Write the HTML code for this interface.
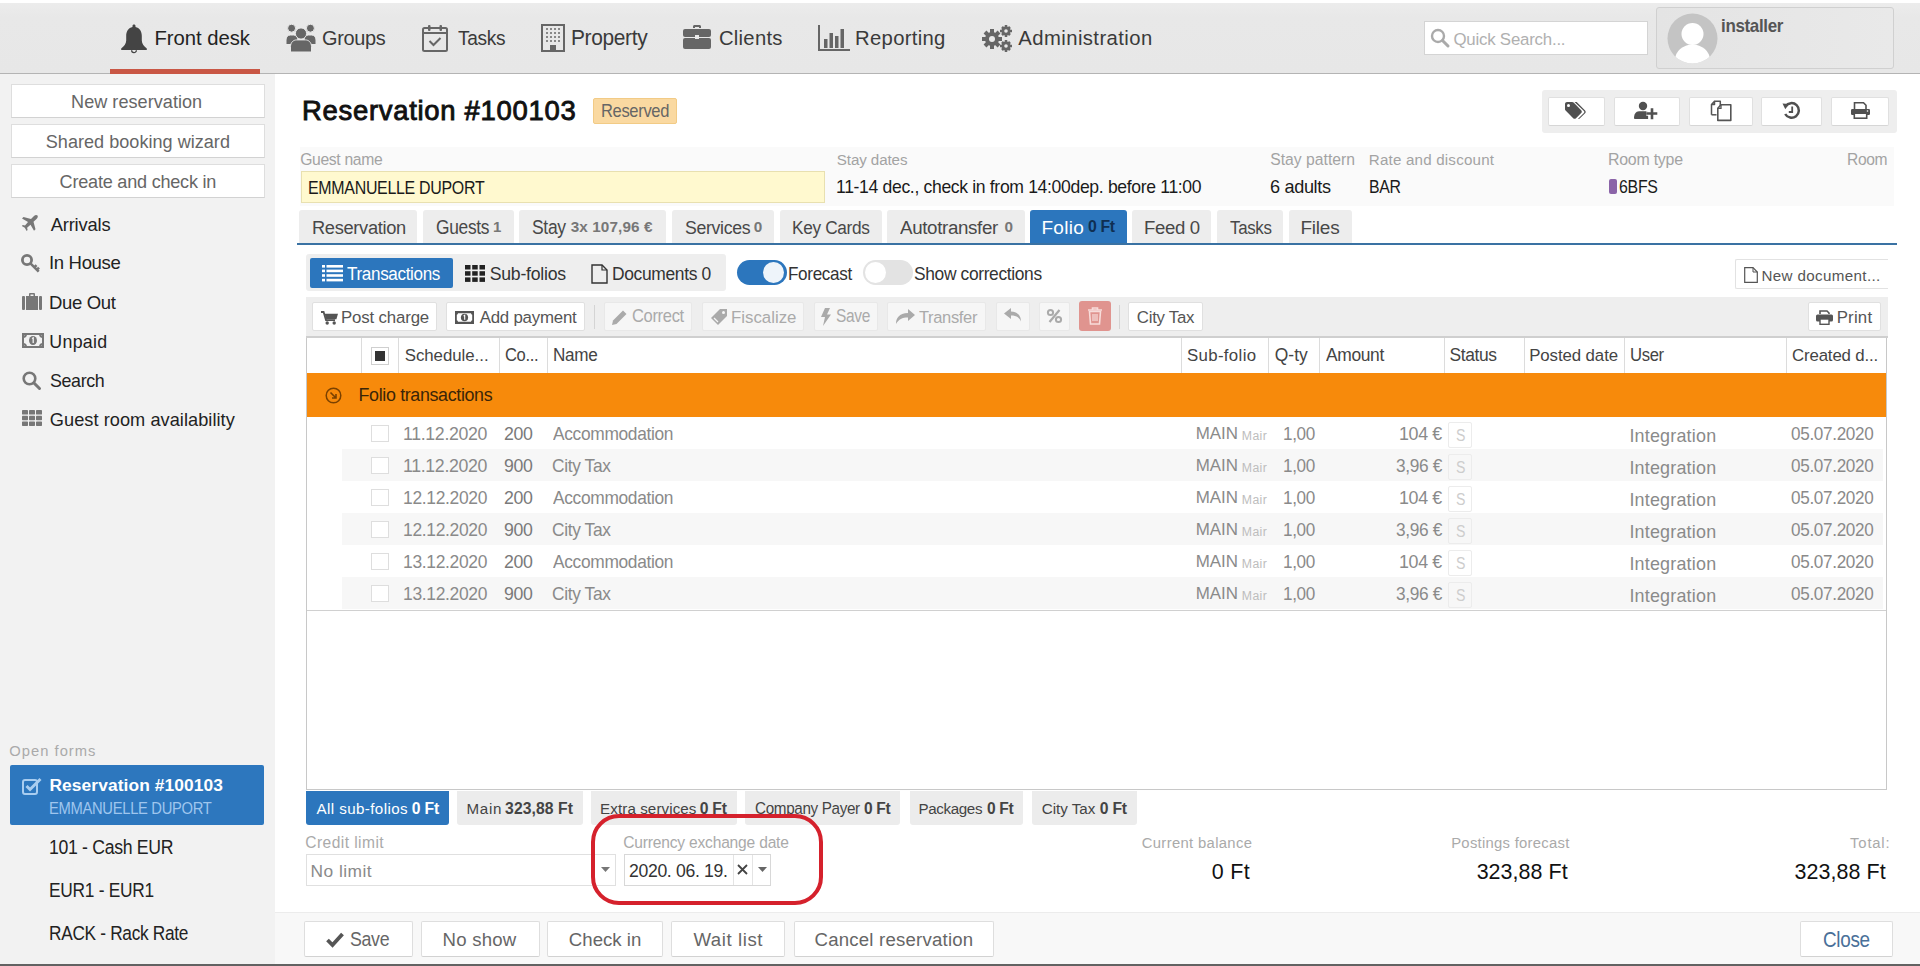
<!DOCTYPE html>
<html><head><meta charset="utf-8">
<style>
*{box-sizing:border-box;margin:0;padding:0}
html,body{width:1920px;height:966px;overflow:hidden;background:#fff;font-family:"Liberation Sans",sans-serif;color:#333}
.a{position:absolute}
.t{position:absolute;white-space:nowrap;line-height:1;transform-origin:0 0}
svg.a{overflow:visible}
</style></head><body>

<div class="a" style="left:0px;top:3px;width:1920px;height:71px;background:linear-gradient(#ececec,#e8e8e8 20%,#e7e7e7);border-bottom:1px solid #b4b4b4"></div>
<div class="a" style="left:110px;top:69px;width:150px;height:5px;background:#c95745"></div>
<svg class="a" style="left:121px;top:24px" width="26" height="28" viewBox="0 0 26 28"><path d="M13 .5c.9 0 1.5.6 1.5 1.4v1c4 .9 6.3 4.3 6.3 8.8v4.8c0 3.2 2.3 6 5 8v1.6H.2v-1.6c2.7-2 5-4.8 5-8v-4.8c0-4.5 2.3-7.9 6.3-8.8v-1c0-.8.6-1.4 1.5-1.4z" fill="#444"/><path d="M10.6 26.2a2.4 2.4 0 0 0 4.8 0" fill="none" stroke="#444" stroke-width="1.3"/></svg>
<div class="t" style="left:154.38px;top:28.00px;font-size:20.28px;letter-spacing:-0.020px;color:#222;">Front desk</div>
<svg class="a" style="left:286px;top:24px" width="30" height="28" viewBox="0 0 30 28"><g fill="#666" stroke="#e8e8e8" stroke-width="1"><circle cx="5.6" cy="4.2" r="4"/><circle cx="24.4" cy="4.2" r="4"/><path d="M0 20.5v-4.5c0-3 1.8-5 4.5-5h3c2.7 0 4.5 2 4.5 5v4.5z"/><path d="M18 20.5v-4.5c0-3 1.8-5 4.5-5h3c2.7 0 4.5 2 4.5 5v4.5z"/><circle cx="15" cy="9.5" r="5.6"/><path d="M4.5 28v-5.5c0-4 2.8-6.6 6.2-6.6h8.6c3.4 0 6.2 2.6 6.2 6.6V28z"/></g></svg>
<div class="t" style="left:322.00px;top:27.00px;font-size:21.00px;letter-spacing:-0.350px;color:#3a3a3a;transform:scaleX(0.9488);">Groups</div>
<svg class="a" style="left:422px;top:24px" width="26" height="28" viewBox="0 0 26 28"><rect x="1" y="4" width="24" height="23" rx="1.5" fill="none" stroke="#666" stroke-width="2"/><path d="M1 9h24" stroke="#666" stroke-width="2"/><rect x="6" y="1" width="2.5" height="6" rx="1" fill="#666"/><rect x="17.5" y="1" width="2.5" height="6" rx="1" fill="#666"/><path d="M7.5 17l4 4 7-7" fill="none" stroke="#666" stroke-width="2"/></svg>
<div class="t" style="left:458.12px;top:28.00px;font-size:20.28px;letter-spacing:-0.350px;color:#3a3a3a;transform:scaleX(0.9434);">Tasks</div>
<svg class="a" style="left:541px;top:24px" width="24" height="28" viewBox="0 0 24 28"><rect x="1" y="1" width="22" height="26" fill="none" stroke="#666" stroke-width="2"/><g fill="#888"><rect x="5" y="4" width="2" height="2"/><rect x="9" y="4" width="2" height="2"/><rect x="13" y="4" width="2" height="2"/><rect x="17" y="4" width="2" height="2"/><rect x="5" y="8" width="2" height="2"/><rect x="9" y="8" width="2" height="2"/><rect x="13" y="8" width="2" height="2"/><rect x="17" y="8" width="2" height="2"/><rect x="5" y="12" width="2" height="2"/><rect x="9" y="12" width="2" height="2"/><rect x="13" y="12" width="2" height="2"/><rect x="17" y="12" width="2" height="2"/><rect x="5" y="16" width="2" height="2"/><rect x="9" y="16" width="2" height="2"/><rect x="13" y="16" width="2" height="2"/><rect x="17" y="16" width="2" height="2"/></g><rect x="9" y="21" width="6" height="6" fill="#666"/></svg>
<div class="t" style="left:571.33px;top:28.00px;font-size:21.30px;letter-spacing:-0.350px;color:#3a3a3a;transform:scaleX(0.9820);">Property</div>
<svg class="a" style="left:683px;top:25px" width="28" height="24" viewBox="0 0 28 24"><path d="M10 3V1.5C10 .7 10.7 0 11.5 0h5c.8 0 1.5.7 1.5 1.5V3h-2V2h-4v1z" fill="#666"/><rect x="0" y="4" width="28" height="8" rx="2" fill="#666"/><rect x="0" y="13" width="28" height="11" rx="2" fill="#666"/><rect x="12" y="10" width="4" height="4" fill="#e9e9e9"/></svg>
<div class="t" style="left:718.99px;top:28.00px;font-size:20.28px;letter-spacing:0.247px;color:#3a3a3a;">Clients</div>
<svg class="a" style="left:818px;top:25px" width="32" height="26" viewBox="0 0 32 26"><path d="M1 0v25h31" fill="none" stroke="#666" stroke-width="2"/><rect x="6" y="14" width="3.5" height="9" fill="#666"/><rect x="11.5" y="8" width="3.5" height="15" fill="#666"/><rect x="17" y="11" width="3.5" height="12" fill="#666"/><rect x="22.5" y="4" width="3.5" height="19" fill="#666"/></svg>
<div class="t" style="left:855.08px;top:28.00px;font-size:20.28px;letter-spacing:0.293px;color:#3a3a3a;">Reporting</div>
<svg class="a" style="left:981px;top:24px" width="32" height="29" viewBox="0 0 32 29"><g fill="#666"><circle cx="11" cy="15" r="7"/><g stroke="#666" stroke-width="4"><path d="M11 5v20M1 15h20M4 8l14 14M18 8L4 22"/></g><circle cx="25" cy="7" r="4.5"/><g stroke="#666" stroke-width="2.5"><path d="M25 1v12M19 7h12M21 3l8 8M29 3l-8 8"/></g><circle cx="25" cy="22" r="4.5"/><g stroke="#666" stroke-width="2.5"><path d="M25 16v12M19 22h12M21 18l8 8M29 18l-8 8"/></g></g><circle cx="11" cy="15" r="3" fill="#e9e9e9"/><circle cx="25" cy="7" r="1.8" fill="#e9e9e9"/><circle cx="25" cy="22" r="1.8" fill="#e9e9e9"/></svg>
<div class="t" style="left:1018.30px;top:28.00px;font-size:20.28px;letter-spacing:0.428px;color:#3a3a3a;">Administration</div>
<div class="a" style="left:1424px;top:21px;width:224px;height:34px;background:#fff;border:1px solid #d4d4d4"></div>
<svg class="a" style="left:1430px;top:28px" width="20" height="20" viewBox="0 0 20 20"><circle cx="8" cy="8" r="6" fill="none" stroke="#aaa" stroke-width="2.4"/><path d="M12.5 12.5l5.5 5.5" stroke="#aaa" stroke-width="3" stroke-linecap="round"/></svg>
<div class="t" style="left:1453.44px;top:32.00px;font-size:16.83px;letter-spacing:-0.210px;color:#b0b0b0;">Quick Search...</div>
<div class="a" style="left:1656px;top:7px;width:238px;height:62px;border:1px solid #d0d0d0;border-radius:3px;background:linear-gradient(90deg,#e4e4e4,#e9e9e9)"></div>
<svg class="a" style="left:1667px;top:13px" width="51" height="51" viewBox="0 0 51 51"><defs><clipPath id="cc"><circle cx="25.5" cy="25.5" r="25"/></clipPath></defs><circle cx="25.5" cy="25.5" r="25" fill="#c4c4c4"/><g clip-path="url(#cc)" fill="#fff"><circle cx="25.5" cy="21" r="11"/><ellipse cx="25.5" cy="47" rx="17.5" ry="15.5"/></g></svg>
<div class="t" style="left:1720.81px;top:18.00px;font-size:17.93px;letter-spacing:-0.350px;color:#555;font-weight:bold;transform:scaleX(0.9466);">installer</div>
<div class="a" style="left:0px;top:74px;width:275px;height:890px;background:#f2f2f2"></div>
<div class="a" style="left:11px;top:84px;width:254px;height:34px;background:#fff;border:1px solid #dedede;border-bottom-color:#d2d2d2"></div>
<div class="a" style="left:11px;top:124px;width:254px;height:34px;background:#fff;border:1px solid #dedede;border-bottom-color:#d2d2d2"></div>
<div class="a" style="left:11px;top:164px;width:254px;height:34px;background:#fff;border:1px solid #dedede;border-bottom-color:#d2d2d2"></div>
<div class="t" style="left:71.05px;top:93.00px;font-size:18.07px;letter-spacing:0.041px;color:#666;">New reservation</div>
<div class="t" style="left:45.79px;top:133.00px;font-size:18.07px;letter-spacing:0.021px;color:#666;">Shared booking wizard</div>
<div class="t" style="left:59.60px;top:173.00px;font-size:18.07px;letter-spacing:-0.214px;color:#666;">Create and check in</div>
<svg class="a" style="left:21px;top:214px" width="18" height="18" viewBox="0 0 18 18"><path d="M16.5 1.5c-1-1-2.5-.5-3.5.5L10 5 2.5 3 1 4.5 7 8 4 11.5 1.8 11 .8 12l3 1.8L5.6 17l1-1-.5-2.2L9.5 10.8l3.5 6 1.5-1.5-2-7.5L15.5 5c1-1 1.8-2.5 1-3.5z" fill="#777"/></svg>
<div class="t" style="left:50.70px;top:216.00px;font-size:18.34px;letter-spacing:-0.177px;color:#222;">Arrivals</div>
<svg class="a" style="left:21px;top:254px" width="20" height="20" viewBox="0 0 20 20"><circle cx="6" cy="6" r="4.6" fill="none" stroke="#777" stroke-width="2.8"/><path d="M9.2 9.2l8.5 8.5M13.3 13.3l2.2-2.2M15.8 15.8l2.2-2.2" stroke="#777" stroke-width="2.6"/></svg>
<div class="t" style="left:49.03px;top:254.00px;font-size:18.84px;letter-spacing:-0.350px;color:#222;transform:scaleX(0.9848);">In House</div>
<svg class="a" style="left:22px;top:293px" width="20" height="17" viewBox="0 0 20 17"><path d="M7 3V1.2C7 .5 7.5 0 8.2 0h3.6c.7 0 1.2.5 1.2 1.2V3h-1.5V1.5h-3V3z" fill="#777"/><rect x="0" y="3" width="3" height="14" rx="1" fill="#777"/><rect x="4" y="3" width="12" height="14" fill="#777"/><rect x="17" y="3" width="3" height="14" rx="1" fill="#777"/></svg>
<div class="t" style="left:49.22px;top:293.00px;font-size:19.00px;letter-spacing:-0.350px;color:#222;transform:scaleX(0.9751);">Due Out</div>
<svg class="a" style="left:22px;top:333px" width="22" height="15" viewBox="0 0 22 15"><rect x="1" y="1" width="20" height="13" fill="none" stroke="#777" stroke-width="2"/><path d="M1 4a3 3 0 0 0 3-3M21 4a3 3 0 0 1-3-3M1 11a3 3 0 0 1 3 3M21 11a3 3 0 0 0-3 3" fill="none" stroke="#777" stroke-width="2"/><ellipse cx="11" cy="7.5" rx="4" ry="4.5" fill="#777"/><path d="M10 5.5l1.2-.6V10" stroke="#f2f2f2" stroke-width="1.3" fill="none"/></svg>
<div class="t" style="left:49.37px;top:334.00px;font-size:17.79px;letter-spacing:0.277px;color:#222;">Unpaid</div>
<svg class="a" style="left:22px;top:371px" width="19" height="19" viewBox="0 0 19 19"><circle cx="7.5" cy="7.5" r="5.8" fill="none" stroke="#777" stroke-width="2.6"/><path d="M12 12l5.5 5.5" stroke="#777" stroke-width="3" stroke-linecap="round"/></svg>
<div class="t" style="left:49.90px;top:372.00px;font-size:18.34px;letter-spacing:-0.350px;color:#222;transform:scaleX(0.9725);">Search</div>
<svg class="a" style="left:22px;top:410px" width="20" height="16" viewBox="0 0 20 16"><g fill="#777"><rect x="0" y="0" width="6" height="4.6" rx=".7"/><rect x="7" y="0" width="6" height="4.6" rx=".7"/><rect x="14" y="0" width="6" height="4.6" rx=".7"/><rect x="0" y="5.7" width="6" height="4.6" rx=".7"/><rect x="7" y="5.7" width="6" height="4.6" rx=".7"/><rect x="14" y="5.7" width="6" height="4.6" rx=".7"/><rect x="0" y="11.4" width="6" height="4.6" rx=".7"/><rect x="7" y="11.4" width="6" height="4.6" rx=".7"/><rect x="14" y="11.4" width="6" height="4.6" rx=".7"/></g></svg>
<div class="t" style="left:49.79px;top:411.00px;font-size:18.21px;letter-spacing:0.048px;color:#222;">Guest room availability</div>
<div class="t" style="left:9.34px;top:744.00px;font-size:14.76px;letter-spacing:1.007px;color:#aaa;">Open forms</div>
<div class="a" style="left:10px;top:765px;width:254px;height:60px;background:#2d77be;border-radius:2px"></div>
<svg class="a" style="left:22px;top:777px" width="20" height="18" viewBox="0 0 20 18"><rect x="1" y="3" width="14" height="14" rx="2" fill="none" stroke="#a9cdf0" stroke-width="2"/><path d="M4.5 9l3.5 3.5L18.5 2" fill="none" stroke="#a9cdf0" stroke-width="3"/></svg>
<div class="t" style="left:49.47px;top:777.00px;font-size:17.38px;letter-spacing:0.093px;color:#fff;font-weight:bold;">Reservation #100103</div>
<div class="t" style="left:49.42px;top:800.00px;font-size:16.43px;letter-spacing:-0.350px;color:#9fc6ee;transform:scaleX(0.8989);">EMMANUELLE DUPORT</div>
<div class="t" style="left:49.27px;top:838.00px;font-size:19.31px;letter-spacing:-0.350px;color:#222;transform:scaleX(0.9154);">101 - Cash EUR</div>
<div class="t" style="left:49.21px;top:880.00px;font-size:20.58px;letter-spacing:-0.350px;color:#222;transform:scaleX(0.8432);">EUR1 - EUR1</div>
<div class="t" style="left:49.22px;top:924.00px;font-size:19.86px;letter-spacing:-0.350px;color:#222;transform:scaleX(0.8694);">RACK - Rack Rate</div>
<div class="t" style="left:302.00px;top:97.00px;font-size:27.45px;letter-spacing:0.711px;color:#111;-webkit-text-stroke:0.9px #111;">Reservation #100103</div>
<div class="a" style="left:593px;top:98px;width:84px;height:26px;background:#fad9a1;border:1px solid #f2cb86;border-radius:2px"></div>
<div class="t" style="left:600.68px;top:103.00px;font-size:17.93px;letter-spacing:-0.350px;color:#666;transform:scaleX(0.9206);">Reserved</div>
<div class="a" style="left:1542px;top:90px;width:355px;height:43px;background:#eeeeee;border-radius:3px"></div>
<div class="a" style="left:1548px;top:97px;width:57px;height:29px;background:#fff;border:1px solid #e0e0e0;border-bottom-color:#d6d6d6;border-radius:2px"></div>
<div class="a" style="left:1614px;top:97px;width:66px;height:29px;background:#fff;border:1px solid #e0e0e0;border-bottom-color:#d6d6d6;border-radius:2px"></div>
<div class="a" style="left:1689px;top:97px;width:64px;height:29px;background:#fff;border:1px solid #e0e0e0;border-bottom-color:#d6d6d6;border-radius:2px"></div>
<div class="a" style="left:1761px;top:97px;width:61px;height:29px;background:#fff;border:1px solid #e0e0e0;border-bottom-color:#d6d6d6;border-radius:2px"></div>
<div class="a" style="left:1831px;top:97px;width:58px;height:29px;background:#fff;border:1px solid #e0e0e0;border-bottom-color:#d6d6d6;border-radius:2px"></div>
<svg class="a" style="left:1565px;top:102px" width="23" height="17" viewBox="0 0 23 17"><path d="M0 2v5.2c0 .6.2 1 .6 1.4l7.6 7.6c.8.8 2 .8 2.8 0l5.2-5.2c.8-.8.8-2 0-2.8L8.6.6C8.2.2 7.7 0 7.2 0H2C.9 0 0 .9 0 2z" fill="#505050"/><circle cx="3.5" cy="3.5" r="1.5" fill="#fff"/><path d="M9.5 0h2.2l8.4 8.4c.8.8.8 2 0 2.8l-5.4 5.4c-.4.4-1.1.5-1.6.2l5.8-5.8c.6-.6.6-1.5 0-2.1z" fill="#505050"/></svg>
<svg class="a" style="left:1634px;top:102px" width="25" height="17" viewBox="0 0 25 17"><circle cx="9" cy="4" r="4.2" fill="#505050"/><path d="M0 16.2c0-3.8 1.8-7 5-7h7.5c.6 0 1.2.2 1.6.5v7.3H1c-.6 0-1-.3-1-.8z" fill="#505050"/><path d="M18 6.2v11M12.3 11.5h11" stroke="#fff" stroke-width="4.6"/><path d="M18 6.2v11M12.3 11.5h11" stroke="#505050" stroke-width="2.6"/></svg>
<svg class="a" style="left:1710px;top:100px" width="22" height="22" viewBox="0 0 22 22"><path d="M4.5 1.2h5.8v6.5M1.5 14.8V4.5l3-3.3v3.3h-3" fill="none" stroke="#555" stroke-width="1.5" stroke-linejoin="round"/><path d="M1.5 14.8h5" stroke="#555" stroke-width="1.5"/><path d="M11 4.8h9.8v15.6H7.8V8.3z" fill="#fff" stroke="#555" stroke-width="1.6" stroke-linejoin="round"/><path d="M11 4.8v3.5H7.8" fill="none" stroke="#555" stroke-width="1.3"/></svg>
<svg class="a" style="left:1782px;top:101px" width="19" height="19" viewBox="0 0 19 19"><path d="M3.6 5.2A7.3 7.3 0 1 1 3.2 13" fill="none" stroke="#505050" stroke-width="2.5"/><path d="M0.5 2.5l6.6.4-3.8 5.4z" fill="#505050"/><path d="M10.2 5.5v5.5H6.8" fill="none" stroke="#505050" stroke-width="1.8"/></svg>
<svg class="a" style="left:1851px;top:102px" width="19" height="17" viewBox="0 0 19 17"><path d="M3.5 7V.8h9l2.5 2.5V7" fill="none" stroke="#505050" stroke-width="1.6"/><rect x="0" y="7" width="19" height="6" rx="1.2" fill="#505050"/><circle cx="16.5" cy="9" r=".8" fill="#fff"/><rect x="3.3" y="11.2" width="12.4" height="5" fill="#fff" stroke="#505050" stroke-width="1.6"/></svg>
<div class="a" style="left:300px;top:147px;width:1594px;height:59px;background:#fafafa"></div>
<div class="t" style="left:300.21px;top:152.00px;font-size:15.71px;letter-spacing:-0.341px;color:#a3a3a3;">Guest name</div>
<div class="a" style="left:301px;top:171px;width:524px;height:32px;background:#fff9cf;border:1px solid #e8e0b0"></div>
<div class="t" style="left:307.72px;top:179.00px;font-size:18.86px;letter-spacing:-0.350px;color:#1a1a1a;transform:scaleX(0.8457);">EMMANUELLE DUPORT</div>
<div class="t" style="left:836.82px;top:152.00px;font-size:15.17px;letter-spacing:-0.108px;color:#a3a3a3;">Stay dates</div>
<div class="t" style="left:835.68px;top:178.00px;font-size:18.34px;letter-spacing:-0.350px;color:#1a1a1a;transform:scaleX(0.9589);">11-14 dec., check in from 14:00dep. before 11:00</div>
<div class="t" style="left:1270.29px;top:152.00px;font-size:15.71px;letter-spacing:0.003px;color:#a3a3a3;">Stay pattern</div>
<div class="t" style="left:1270.09px;top:178.00px;font-size:18.34px;letter-spacing:-0.350px;color:#1a1a1a;transform:scaleX(0.9886);">6 adults</div>
<div class="t" style="left:1368.79px;top:152.00px;font-size:15.17px;letter-spacing:0.188px;color:#a3a3a3;">Rate and discount</div>
<div class="t" style="left:1368.73px;top:177.00px;font-size:19.28px;letter-spacing:-0.350px;color:#1a1a1a;transform:scaleX(0.8219);">BAR</div>
<div class="t" style="left:1608.02px;top:152.00px;font-size:15.94px;letter-spacing:-0.261px;color:#a3a3a3;">Room type</div>
<div class="a" style="left:1609px;top:179px;width:8px;height:15px;background:#8b64a8;border-radius:2px"></div>
<div class="t" style="left:1618.50px;top:177.00px;font-size:19.00px;letter-spacing:-0.350px;color:#1a1a1a;transform:scaleX(0.8377);">6BFS</div>
<div class="t" style="left:1847.05px;top:152.00px;font-size:15.94px;letter-spacing:-0.350px;color:#a3a3a3;transform:scaleX(0.9795);">Room</div>
<div class="a" style="left:299px;top:210px;width:118px;height:33px;background:#ededed;border-radius:3px 3px 0 0"></div>
<div class="a" style="left:423px;top:210px;width:91px;height:33px;background:#ededed;border-radius:3px 3px 0 0"></div>
<div class="a" style="left:519px;top:210px;width:147px;height:33px;background:#ededed;border-radius:3px 3px 0 0"></div>
<div class="a" style="left:672px;top:210px;width:102px;height:33px;background:#ededed;border-radius:3px 3px 0 0"></div>
<div class="a" style="left:780px;top:210px;width:102px;height:33px;background:#ededed;border-radius:3px 3px 0 0"></div>
<div class="a" style="left:887px;top:210px;width:138px;height:33px;background:#ededed;border-radius:3px 3px 0 0"></div>
<div class="a" style="left:1132px;top:210px;width:79px;height:33px;background:#ededed;border-radius:3px 3px 0 0"></div>
<div class="a" style="left:1217px;top:210px;width:66px;height:33px;background:#ededed;border-radius:3px 3px 0 0"></div>
<div class="a" style="left:1289px;top:210px;width:63px;height:33px;background:#ededed;border-radius:3px 3px 0 0"></div>
<div class="a" style="left:1030px;top:210px;width:97px;height:34px;background:#2c76bd;border-radius:3px 3px 0 0"></div>
<div class="t" style="left:311.94px;top:218.00px;font-size:19.03px;letter-spacing:-0.350px;color:#484848;transform:scaleX(0.9613);">Reservation</div>
<div class="t" style="left:435.83px;top:218.00px;font-size:19.71px;letter-spacing:-0.350px;color:#484848;transform:scaleX(0.8820);">Guests</div>
<div class="t" style="left:493.20px;top:219.00px;font-size:15.51px;letter-spacing:-0.350px;color:#777;font-weight:bold;transform:scaleX(0.9656);">1</div>
<div class="t" style="left:531.91px;top:218.00px;font-size:19.71px;letter-spacing:-0.350px;color:#484848;transform:scaleX(0.8882);">Stay</div>
<div class="t" style="left:570.72px;top:219.00px;font-size:15.29px;letter-spacing:0.100px;color:#777;font-weight:bold;">3x 107,96 €</div>
<div class="t" style="left:685.10px;top:218.00px;font-size:19.03px;letter-spacing:-0.350px;color:#484848;transform:scaleX(0.9316);">Services</div>
<div class="t" style="left:753.79px;top:219.00px;font-size:15.29px;letter-spacing:0.339px;color:#777;font-weight:bold;">0</div>
<div class="t" style="left:791.62px;top:218.00px;font-size:19.03px;letter-spacing:-0.350px;color:#484848;transform:scaleX(0.9058);">Key Cards</div>
<div class="t" style="left:900.00px;top:218.00px;font-size:19.03px;letter-spacing:-0.350px;color:#484848;transform:scaleX(0.9849);">Autotransfer</div>
<div class="t" style="left:1004.39px;top:219.00px;font-size:15.29px;letter-spacing:-0.261px;color:#777;font-weight:bold;">0</div>
<div class="t" style="left:1041.48px;top:218.00px;font-size:19.03px;letter-spacing:0.269px;color:#fff;">Folio</div>
<div class="t" style="left:1088.07px;top:219.00px;font-size:16.00px;letter-spacing:-0.350px;color:#0f2f52;font-weight:bold;transform:scaleX(0.9868);">0 Ft</div>
<div class="t" style="left:1143.51px;top:218.00px;font-size:19.03px;letter-spacing:-0.350px;color:#484848;transform:scaleX(0.9772);">Feed 0</div>
<div class="t" style="left:1229.66px;top:218.00px;font-size:19.03px;letter-spacing:-0.350px;color:#484848;transform:scaleX(0.8877);">Tasks</div>
<div class="t" style="left:1300.48px;top:218.00px;font-size:19.03px;letter-spacing:-0.243px;color:#484848;">Files</div>
<div class="a" style="left:297px;top:243px;width:1600px;height:2px;background:#3a72a3"></div>
<div class="a" style="left:306px;top:254px;width:420px;height:37px;background:#eeeeee;border-radius:3px"></div>
<div class="a" style="left:310px;top:258px;width:143px;height:30px;background:#2c76bd;border-radius:2px"></div>
<svg class="a" style="left:322px;top:265px" width="21" height="17" viewBox="0 0 21 17"><g fill="#fff"><rect x="0" y="0" width="3" height="2.6"/><rect x="4.5" y="0" width="16.5" height="2.6"/><rect x="0" y="4.6" width="3" height="2.6"/><rect x="4.5" y="4.6" width="16.5" height="2.6"/><rect x="0" y="9.2" width="3" height="2.6"/><rect x="4.5" y="9.2" width="16.5" height="2.6"/><rect x="0" y="13.8" width="3" height="2.6"/><rect x="4.5" y="13.8" width="16.5" height="2.6"/></g></svg>
<div class="t" style="left:347.16px;top:266.00px;font-size:17.66px;letter-spacing:-0.350px;color:#fff;transform:scaleX(0.9672);">Transactions</div>
<svg class="a" style="left:465px;top:265px" width="20" height="17" viewBox="0 0 20 17"><g fill="#222"><rect x="0" y="0" width="5.5" height="4.5"/><rect x="7.2" y="0" width="5.5" height="4.5"/><rect x="14.5" y="0" width="5.5" height="4.5"/><rect x="0" y="6.2" width="5.5" height="4.5"/><rect x="7.2" y="6.2" width="5.5" height="4.5"/><rect x="14.5" y="6.2" width="5.5" height="4.5"/><rect x="0" y="12.4" width="5.5" height="4.5"/><rect x="7.2" y="12.4" width="5.5" height="4.5"/><rect x="14.5" y="12.4" width="5.5" height="4.5"/></g></svg>
<div class="t" style="left:489.71px;top:266.00px;font-size:17.66px;letter-spacing:-0.229px;color:#333;">Sub-folios</div>
<svg class="a" style="left:591px;top:264px" width="17" height="20" viewBox="0 0 17 20"><path d="M1 1h10l5 5v13H1z" fill="none" stroke="#333" stroke-width="1.4"/><path d="M11 1v5h5" fill="none" stroke="#333" stroke-width="1.2"/></svg>
<div class="t" style="left:612.31px;top:265.00px;font-size:18.29px;letter-spacing:-0.350px;color:#333;transform:scaleX(0.9530);">Documents 0</div>
<div class="a" style="left:737px;top:260px;width:50px;height:25px;background:#2c76bd;border-radius:13px"></div>
<div class="a" style="left:763px;top:262px;width:21px;height:21px;background:#eef4fa;border-radius:50%"></div>
<div class="t" style="left:787.63px;top:265.00px;font-size:18.55px;letter-spacing:-0.350px;color:#333;transform:scaleX(0.9215);">Forecast</div>
<div class="a" style="left:863px;top:260px;width:50px;height:25px;background:#e3e3e3;border-radius:13px"></div>
<div class="a" style="left:865px;top:262px;width:21px;height:21px;background:#fff;border-radius:50%"></div>
<div class="t" style="left:914.22px;top:266.00px;font-size:17.66px;letter-spacing:-0.350px;color:#333;transform:scaleX(0.9841);">Show corrections</div>
<div class="a" style="left:1735px;top:259px;width:153px;height:30px;background:#fff;border:1px solid #e2e2e2;border-right:none;border-radius:2px 0 0 2px"></div>
<svg class="a" style="left:1744px;top:267px" width="14" height="16" viewBox="0 0 14 16"><path d="M.7.7h8.3l4.3 4.3v10.3H.7z" fill="none" stroke="#555" stroke-width="1.2"/><path d="M9 .7v4.3h4.3" fill="none" stroke="#555" stroke-width="1"/></svg>
<div class="t" style="left:1761.39px;top:268.00px;font-size:15.17px;letter-spacing:0.370px;color:#555;">New document...</div>
<div class="a" style="left:306px;top:297px;width:1582px;height:41px;background:#eeeeee;border-bottom:2px solid #cfcfcf"></div>
<div class="a" style="left:312px;top:302px;width:125px;height:29px;background:#fff;border:1px solid #e0e0e0;border-radius:2px"></div>
<svg class="a" style="left:321px;top:311px" width="17" height="14" viewBox="0 0 17 14"><path d="M0 1h2.6l2.4 8.2h9" fill="none" stroke="#555" stroke-width="1.8"/><path d="M3.6 2.8H17l-1.6 5.4H5.2z" fill="#555"/><circle cx="6.2" cy="12" r="1.7" fill="#555"/><circle cx="13.2" cy="12" r="1.7" fill="#555"/></svg>
<div class="t" style="left:341.05px;top:310.00px;font-size:16.83px;letter-spacing:-0.167px;color:#555;">Post charge</div>
<div class="a" style="left:446px;top:302px;width:139px;height:29px;background:#fff;border:1px solid #e0e0e0;border-radius:2px"></div>
<svg class="a" style="left:455px;top:311px" width="19" height="13" viewBox="0 0 19 13"><rect x="0" y="0" width="19" height="13" fill="#555"/><path d="M3 2.2h13a1.8 1.8 0 0 0 1.2 1.6v5.4A1.8 1.8 0 0 0 16 10.8H3a1.8 1.8 0 0 0-1.2-1.6V3.8A1.8 1.8 0 0 0 3 2.2z" fill="#fff"/><ellipse cx="9.5" cy="6.5" rx="3.6" ry="3.8" fill="#555"/><path d="M8.6 4.9l1.1-.6v4.4" stroke="#fff" stroke-width="1.1" fill="none"/></svg>
<div class="t" style="left:479.70px;top:310.00px;font-size:16.83px;letter-spacing:-0.213px;color:#555;">Add payment</div>
<div class="a" style="left:594px;top:305px;width:1px;height:24px;background:#d4d4d4"></div>
<div class="a" style="left:604px;top:302px;width:88px;height:29px;background:#f6f6f6;border:1px solid #e8e8e8;border-radius:2px"></div>
<svg class="a" style="left:612px;top:309px" width="16" height="16" viewBox="0 0 16 16"><path d="M0 16l1-4.5L11 1.5l3.5 3.5L4.5 15z" fill="#aaa"/></svg>
<div class="t" style="left:631.97px;top:308.00px;font-size:17.43px;letter-spacing:-0.350px;color:#aaa;transform:scaleX(0.9478);">Correct</div>
<div class="a" style="left:702px;top:302px;width:102px;height:29px;background:#f6f6f6;border:1px solid #e8e8e8;border-radius:2px"></div>
<svg class="a" style="left:710px;top:308px" width="18" height="18" viewBox="0 0 18 18"><path d="M1 10l9-9h7v7l-9 9z" fill="#aaa"/><circle cx="13.5" cy="4.5" r="1.5" fill="#f6f6f6"/><path d="M4 10l4 4" stroke="#f6f6f6" stroke-width="1.2"/></svg>
<div class="t" style="left:730.95px;top:310.00px;font-size:16.83px;letter-spacing:0.006px;color:#aaa;">Fiscalize</div>
<div class="a" style="left:814px;top:302px;width:64px;height:29px;background:#f6f6f6;border:1px solid #e8e8e8;border-radius:2px"></div>
<svg class="a" style="left:821px;top:308px" width="11" height="18" viewBox="0 0 11 18"><path d="M4 0h5L6 6.5h4L2 18l2-9H0z" fill="#aaa"/></svg>
<div class="t" style="left:836.30px;top:308.00px;font-size:17.43px;letter-spacing:-0.350px;color:#aaa;transform:scaleX(0.8890);">Save</div>
<div class="a" style="left:887px;top:302px;width:99px;height:29px;background:#f6f6f6;border:1px solid #e8e8e8;border-radius:2px"></div>
<svg class="a" style="left:896px;top:309px" width="19" height="15" viewBox="0 0 19 15"><path d="M12 0l7 6-7 6V8.5C6 8.5 3 10 0 15c0-6 3-10.5 12-11z" fill="#aaa"/></svg>
<div class="t" style="left:919.37px;top:310.00px;font-size:16.83px;letter-spacing:-0.350px;color:#aaa;transform:scaleX(0.9801);">Transfer</div>
<div class="a" style="left:996px;top:302px;width:34px;height:29px;background:#f6f6f6;border:1px solid #e8e8e8;border-radius:2px"></div>
<svg class="a" style="left:1004px;top:308px" width="18" height="15" viewBox="0 0 18 15"><path d="M7 0L0 5.5 7 11V7.5c5 0 8 1.5 10 6 0-5-2.5-9.5-10-10z" fill="#aaa"/></svg>
<div class="a" style="left:1039px;top:302px;width:31px;height:29px;background:#f6f6f6;border:1px solid #e8e8e8;border-radius:2px"></div>
<svg class="a" style="left:1047px;top:309px" width="15" height="14" viewBox="0 0 15 14"><circle cx="3.5" cy="3.5" r="2.6" fill="none" stroke="#aaa" stroke-width="2"/><circle cx="11.5" cy="10.5" r="2.6" fill="none" stroke="#aaa" stroke-width="2"/><path d="M12.5 1L2.5 13" stroke="#aaa" stroke-width="2.2"/></svg>
<div class="a" style="left:1079px;top:301px;width:32px;height:30px;background:#e0948f;border-radius:3px"></div>
<svg class="a" style="left:1087px;top:307px" width="16" height="18" viewBox="0 0 16 18"><path d="M1 3h14M5.5 3V1h5v2" fill="none" stroke="#f7dcda" stroke-width="1.6"/><path d="M2.5 4.5h11l-1 12.5h-9z" fill="none" stroke="#f7dcda" stroke-width="1.6"/><path d="M6 7v7M8 7v7M10 7v7" stroke="#f7dcda" stroke-width="1.2"/></svg>
<div class="a" style="left:1119px;top:305px;width:1px;height:24px;background:#d4d4d4"></div>
<div class="a" style="left:1128px;top:302px;width:75px;height:29px;background:#fff;border:1px solid #e0e0e0;border-radius:2px"></div>
<div class="t" style="left:1136.76px;top:310.00px;font-size:16.83px;letter-spacing:-0.251px;color:#555;">City Tax</div>
<div class="a" style="left:1808px;top:302px;width:73px;height:29px;background:#fff;border:1px solid #e0e0e0;border-radius:2px"></div>
<svg class="a" style="left:1816px;top:310px" width="17" height="15" viewBox="0 0 17 15"><path d="M4 4V1h7l2 2v1" fill="none" stroke="#555" stroke-width="1.6"/><rect x="0" y="4.5" width="17" height="7" rx="1.5" fill="#555"/><rect x="4" y="9" width="9" height="5.3" fill="#fff" stroke="#555" stroke-width="1.4"/></svg>
<div class="t" style="left:1836.65px;top:310.00px;font-size:16.83px;letter-spacing:0.212px;color:#555;">Print</div>
<div class="a" style="left:306px;top:338px;width:1581px;height:452px;border-left:1px solid #c8c8c8;border-right:1px solid #c8c8c8;border-bottom:1px solid #c8c8c8"></div>
<div class="a" style="left:361px;top:338px;width:1px;height:35px;background:#dcdcdc"></div>
<div class="a" style="left:398px;top:338px;width:1px;height:35px;background:#dcdcdc"></div>
<div class="a" style="left:499px;top:338px;width:1px;height:35px;background:#dcdcdc"></div>
<div class="a" style="left:547px;top:338px;width:1px;height:35px;background:#dcdcdc"></div>
<div class="a" style="left:1181px;top:338px;width:1px;height:35px;background:#dcdcdc"></div>
<div class="a" style="left:1268px;top:338px;width:1px;height:35px;background:#dcdcdc"></div>
<div class="a" style="left:1319px;top:338px;width:1px;height:35px;background:#dcdcdc"></div>
<div class="a" style="left:1444px;top:338px;width:1px;height:35px;background:#dcdcdc"></div>
<div class="a" style="left:1524px;top:338px;width:1px;height:35px;background:#dcdcdc"></div>
<div class="a" style="left:1624px;top:338px;width:1px;height:35px;background:#dcdcdc"></div>
<div class="a" style="left:1786px;top:338px;width:1px;height:35px;background:#dcdcdc"></div>
<div class="t" style="left:404.74px;top:348.00px;font-size:16.83px;letter-spacing:-0.037px;color:#444;">Schedule...</div>
<div class="t" style="left:504.87px;top:347.00px;font-size:17.43px;letter-spacing:-0.350px;color:#444;transform:scaleX(0.9504);">Co...</div>
<div class="t" style="left:552.53px;top:347.00px;font-size:17.68px;letter-spacing:-0.350px;color:#444;transform:scaleX(0.9690);">Name</div>
<div class="t" style="left:1186.94px;top:348.00px;font-size:16.83px;letter-spacing:0.343px;color:#444;">Sub-folio</div>
<div class="t" style="left:1274.82px;top:347.00px;font-size:17.43px;letter-spacing:-0.019px;color:#444;">Q-ty</div>
<div class="t" style="left:1325.50px;top:347.00px;font-size:17.68px;letter-spacing:-0.350px;color:#444;transform:scaleX(0.9852);">Amount</div>
<div class="t" style="left:1449.42px;top:347.00px;font-size:17.43px;letter-spacing:-0.343px;color:#444;">Status</div>
<div class="t" style="left:1529.15px;top:348.00px;font-size:16.83px;letter-spacing:-0.087px;color:#444;">Posted date</div>
<div class="t" style="left:1629.75px;top:347.00px;font-size:17.68px;letter-spacing:-0.350px;color:#444;transform:scaleX(0.9404);">User</div>
<div class="t" style="left:1792.06px;top:348.00px;font-size:16.83px;letter-spacing:-0.162px;color:#444;">Created d...</div>
<div class="a" style="left:371px;top:347px;width:18px;height:18px;border:1px solid #cfcfcf;background:#fff"></div>
<div class="a" style="left:375px;top:351px;width:10px;height:10px;background:#333"></div>
<div class="a" style="left:307px;top:373px;width:1579px;height:44px;background:#f78a0b"></div>
<svg class="a" style="left:325px;top:387px" width="17" height="17" viewBox="0 0 17 17"><circle cx="8.5" cy="8.5" r="7.3" fill="none" stroke="#7a4100" stroke-width="1.5"/><path d="M5.5 5.5l5.5 5.5M11 7v4H7" fill="none" stroke="#7a4100" stroke-width="1.6"/></svg>
<div class="t" style="left:358.57px;top:387.00px;font-size:17.86px;letter-spacing:-0.347px;color:#3a2508;">Folio transactions</div>
<div class="a" style="left:371px;top:425px;width:18px;height:17px;border:1px solid #dedede;background:#fff"></div>
<div class="t" style="left:403.37px;top:425.00px;font-size:18.57px;letter-spacing:-0.350px;color:#8a8a8a;transform:scaleX(0.9553);">11.12.2020</div>
<div class="t" style="left:504.21px;top:425.00px;font-size:18.57px;letter-spacing:-0.350px;color:#7a7a7a;transform:scaleX(0.9566);">200</div>
<div class="t" style="left:552.50px;top:426.00px;font-size:17.93px;letter-spacing:-0.350px;color:#8a8a8a;transform:scaleX(0.9692);">Accommodation</div>
<div class="t" style="left:1195.64px;top:426.00px;font-size:16.96px;letter-spacing:-0.026px;color:#8a8a8a;">MAIN</div>
<div class="t" style="left:1241.82px;top:430.00px;font-size:12.28px;letter-spacing:0.384px;color:#bdbdbd;">Mair</div>
<div class="t" style="left:1283.12px;top:425.00px;font-size:18.14px;letter-spacing:-0.350px;color:#8a8a8a;transform:scaleX(0.9429);">1,00</div>
<div class="t" style="left:1399.06px;top:425.00px;font-size:18.00px;letter-spacing:-0.350px;color:#8a8a8a;transform:scaleX(0.9909);">104 €</div>
<div class="a" style="left:1448px;top:422px;width:24px;height:26px;border:1px solid #ececec;border-radius:2px"></div>
<div class="t" style="left:1455.86px;top:428.00px;font-size:15.71px;letter-spacing:-0.350px;color:#cdcdcd;transform:scaleX(0.8980);">S</div>
<div class="t" style="left:1629.39px;top:428.00px;font-size:17.93px;letter-spacing:0.206px;color:#8a8a8a;">Integration</div>
<div class="t" style="left:1790.62px;top:425.00px;font-size:18.57px;letter-spacing:-0.350px;color:#8a8a8a;transform:scaleX(0.9219);">05.07.2020</div>
<div class="a" style="left:342px;top:449px;width:1541px;height:32px;background:#f7f7f7"></div>
<div class="a" style="left:371px;top:457px;width:18px;height:17px;border:1px solid #dedede;background:#fff"></div>
<div class="t" style="left:403.37px;top:457.00px;font-size:18.57px;letter-spacing:-0.350px;color:#8a8a8a;transform:scaleX(0.9553);">11.12.2020</div>
<div class="t" style="left:504.30px;top:457.00px;font-size:18.57px;letter-spacing:-0.350px;color:#7a7a7a;transform:scaleX(0.9535);">900</div>
<div class="t" style="left:551.63px;top:458.00px;font-size:17.93px;letter-spacing:-0.350px;color:#8a8a8a;transform:scaleX(0.9658);">City Tax</div>
<div class="t" style="left:1195.64px;top:458.00px;font-size:16.96px;letter-spacing:-0.026px;color:#8a8a8a;">MAIN</div>
<div class="t" style="left:1241.82px;top:462.00px;font-size:12.28px;letter-spacing:0.384px;color:#bdbdbd;">Mair</div>
<div class="t" style="left:1283.12px;top:457.00px;font-size:18.14px;letter-spacing:-0.350px;color:#8a8a8a;transform:scaleX(0.9429);">1,00</div>
<div class="t" style="left:1395.91px;top:457.00px;font-size:18.00px;letter-spacing:-0.350px;color:#8a8a8a;transform:scaleX(0.9598);">3,96 €</div>
<div class="a" style="left:1448px;top:454px;width:24px;height:26px;border:1px solid #ececec;border-radius:2px"></div>
<div class="t" style="left:1455.86px;top:460.00px;font-size:15.71px;letter-spacing:-0.350px;color:#cdcdcd;transform:scaleX(0.8980);">S</div>
<div class="t" style="left:1629.39px;top:460.00px;font-size:17.93px;letter-spacing:0.206px;color:#8a8a8a;">Integration</div>
<div class="t" style="left:1790.62px;top:457.00px;font-size:18.57px;letter-spacing:-0.350px;color:#8a8a8a;transform:scaleX(0.9219);">05.07.2020</div>
<div class="a" style="left:371px;top:489px;width:18px;height:17px;border:1px solid #dedede;background:#fff"></div>
<div class="t" style="left:403.39px;top:489.00px;font-size:18.57px;letter-spacing:-0.350px;color:#8a8a8a;transform:scaleX(0.9401);">12.12.2020</div>
<div class="t" style="left:504.21px;top:489.00px;font-size:18.57px;letter-spacing:-0.350px;color:#7a7a7a;transform:scaleX(0.9566);">200</div>
<div class="t" style="left:552.50px;top:490.00px;font-size:17.93px;letter-spacing:-0.350px;color:#8a8a8a;transform:scaleX(0.9692);">Accommodation</div>
<div class="t" style="left:1195.64px;top:490.00px;font-size:16.96px;letter-spacing:-0.026px;color:#8a8a8a;">MAIN</div>
<div class="t" style="left:1241.82px;top:494.00px;font-size:12.28px;letter-spacing:0.384px;color:#bdbdbd;">Mair</div>
<div class="t" style="left:1283.12px;top:489.00px;font-size:18.14px;letter-spacing:-0.350px;color:#8a8a8a;transform:scaleX(0.9429);">1,00</div>
<div class="t" style="left:1399.06px;top:489.00px;font-size:18.00px;letter-spacing:-0.350px;color:#8a8a8a;transform:scaleX(0.9909);">104 €</div>
<div class="a" style="left:1448px;top:486px;width:24px;height:26px;border:1px solid #ececec;border-radius:2px"></div>
<div class="t" style="left:1455.86px;top:492.00px;font-size:15.71px;letter-spacing:-0.350px;color:#cdcdcd;transform:scaleX(0.8980);">S</div>
<div class="t" style="left:1629.39px;top:492.00px;font-size:17.93px;letter-spacing:0.206px;color:#8a8a8a;">Integration</div>
<div class="t" style="left:1790.62px;top:489.00px;font-size:18.57px;letter-spacing:-0.350px;color:#8a8a8a;transform:scaleX(0.9219);">05.07.2020</div>
<div class="a" style="left:342px;top:513px;width:1541px;height:32px;background:#f7f7f7"></div>
<div class="a" style="left:371px;top:521px;width:18px;height:17px;border:1px solid #dedede;background:#fff"></div>
<div class="t" style="left:403.39px;top:521.00px;font-size:18.57px;letter-spacing:-0.350px;color:#8a8a8a;transform:scaleX(0.9401);">12.12.2020</div>
<div class="t" style="left:504.30px;top:521.00px;font-size:18.57px;letter-spacing:-0.350px;color:#7a7a7a;transform:scaleX(0.9535);">900</div>
<div class="t" style="left:551.63px;top:522.00px;font-size:17.93px;letter-spacing:-0.350px;color:#8a8a8a;transform:scaleX(0.9658);">City Tax</div>
<div class="t" style="left:1195.64px;top:522.00px;font-size:16.96px;letter-spacing:-0.026px;color:#8a8a8a;">MAIN</div>
<div class="t" style="left:1241.82px;top:526.00px;font-size:12.28px;letter-spacing:0.384px;color:#bdbdbd;">Mair</div>
<div class="t" style="left:1283.12px;top:521.00px;font-size:18.14px;letter-spacing:-0.350px;color:#8a8a8a;transform:scaleX(0.9429);">1,00</div>
<div class="t" style="left:1395.91px;top:521.00px;font-size:18.00px;letter-spacing:-0.350px;color:#8a8a8a;transform:scaleX(0.9598);">3,96 €</div>
<div class="a" style="left:1448px;top:518px;width:24px;height:26px;border:1px solid #ececec;border-radius:2px"></div>
<div class="t" style="left:1455.86px;top:524.00px;font-size:15.71px;letter-spacing:-0.350px;color:#cdcdcd;transform:scaleX(0.8980);">S</div>
<div class="t" style="left:1629.39px;top:524.00px;font-size:17.93px;letter-spacing:0.206px;color:#8a8a8a;">Integration</div>
<div class="t" style="left:1790.62px;top:521.00px;font-size:18.57px;letter-spacing:-0.350px;color:#8a8a8a;transform:scaleX(0.9219);">05.07.2020</div>
<div class="a" style="left:371px;top:553px;width:18px;height:17px;border:1px solid #dedede;background:#fff"></div>
<div class="t" style="left:403.39px;top:553.00px;font-size:18.57px;letter-spacing:-0.350px;color:#8a8a8a;transform:scaleX(0.9401);">13.12.2020</div>
<div class="t" style="left:504.21px;top:553.00px;font-size:18.57px;letter-spacing:-0.350px;color:#7a7a7a;transform:scaleX(0.9566);">200</div>
<div class="t" style="left:552.50px;top:554.00px;font-size:17.93px;letter-spacing:-0.350px;color:#8a8a8a;transform:scaleX(0.9692);">Accommodation</div>
<div class="t" style="left:1195.64px;top:554.00px;font-size:16.96px;letter-spacing:-0.026px;color:#8a8a8a;">MAIN</div>
<div class="t" style="left:1241.82px;top:558.00px;font-size:12.28px;letter-spacing:0.384px;color:#bdbdbd;">Mair</div>
<div class="t" style="left:1283.12px;top:553.00px;font-size:18.14px;letter-spacing:-0.350px;color:#8a8a8a;transform:scaleX(0.9429);">1,00</div>
<div class="t" style="left:1399.06px;top:553.00px;font-size:18.00px;letter-spacing:-0.350px;color:#8a8a8a;transform:scaleX(0.9909);">104 €</div>
<div class="a" style="left:1448px;top:550px;width:24px;height:26px;border:1px solid #ececec;border-radius:2px"></div>
<div class="t" style="left:1455.86px;top:556.00px;font-size:15.71px;letter-spacing:-0.350px;color:#cdcdcd;transform:scaleX(0.8980);">S</div>
<div class="t" style="left:1629.39px;top:556.00px;font-size:17.93px;letter-spacing:0.206px;color:#8a8a8a;">Integration</div>
<div class="t" style="left:1790.62px;top:553.00px;font-size:18.57px;letter-spacing:-0.350px;color:#8a8a8a;transform:scaleX(0.9219);">05.07.2020</div>
<div class="a" style="left:342px;top:577px;width:1541px;height:32px;background:#f7f7f7"></div>
<div class="a" style="left:371px;top:585px;width:18px;height:17px;border:1px solid #dedede;background:#fff"></div>
<div class="t" style="left:403.39px;top:585.00px;font-size:18.57px;letter-spacing:-0.350px;color:#8a8a8a;transform:scaleX(0.9401);">13.12.2020</div>
<div class="t" style="left:504.30px;top:585.00px;font-size:18.57px;letter-spacing:-0.350px;color:#7a7a7a;transform:scaleX(0.9535);">900</div>
<div class="t" style="left:551.63px;top:586.00px;font-size:17.93px;letter-spacing:-0.350px;color:#8a8a8a;transform:scaleX(0.9658);">City Tax</div>
<div class="t" style="left:1195.64px;top:586.00px;font-size:16.96px;letter-spacing:-0.026px;color:#8a8a8a;">MAIN</div>
<div class="t" style="left:1241.82px;top:590.00px;font-size:12.28px;letter-spacing:0.384px;color:#bdbdbd;">Mair</div>
<div class="t" style="left:1283.12px;top:585.00px;font-size:18.14px;letter-spacing:-0.350px;color:#8a8a8a;transform:scaleX(0.9429);">1,00</div>
<div class="t" style="left:1395.91px;top:585.00px;font-size:18.00px;letter-spacing:-0.350px;color:#8a8a8a;transform:scaleX(0.9598);">3,96 €</div>
<div class="a" style="left:1448px;top:582px;width:24px;height:26px;border:1px solid #ececec;border-radius:2px"></div>
<div class="t" style="left:1455.86px;top:588.00px;font-size:15.71px;letter-spacing:-0.350px;color:#cdcdcd;transform:scaleX(0.8980);">S</div>
<div class="t" style="left:1629.39px;top:588.00px;font-size:17.93px;letter-spacing:0.206px;color:#8a8a8a;">Integration</div>
<div class="t" style="left:1790.62px;top:585.00px;font-size:18.57px;letter-spacing:-0.350px;color:#8a8a8a;transform:scaleX(0.9219);">05.07.2020</div>
<div class="a" style="left:307px;top:610px;width:1579px;height:1px;background:#d0d0d0"></div>
<div class="a" style="left:306px;top:791px;width:143px;height:34px;background:#2c76bd;border-radius:0 0 3px 3px"></div>
<div class="t" style="left:316.50px;top:801.00px;font-size:15.17px;letter-spacing:0.400px;color:#fff;">All sub-folios</div>
<div class="t" style="left:411.67px;top:801.00px;font-size:15.71px;letter-spacing:-0.102px;color:#fff;font-weight:bold;">0 Ft</div>
<div class="a" style="left:457px;top:791px;width:126px;height:34px;background:#ececec;border-radius:0 0 3px 3px"></div>
<div class="t" style="left:466.49px;top:801.00px;font-size:15.17px;letter-spacing:0.717px;color:#444;">Main</div>
<div class="t" style="left:505.11px;top:801.00px;font-size:15.71px;letter-spacing:0.071px;color:#444;font-weight:bold;">323,88 Ft</div>
<div class="a" style="left:591px;top:791px;width:146px;height:34px;background:#ececec;border-radius:0 0 3px 3px"></div>
<div class="t" style="left:600.09px;top:801.00px;font-size:15.17px;letter-spacing:0.089px;color:#444;">Extra services</div>
<div class="t" style="left:699.87px;top:801.00px;font-size:15.71px;letter-spacing:-0.302px;color:#444;font-weight:bold;">0 Ft</div>
<div class="a" style="left:745px;top:791px;width:155px;height:34px;background:#ececec;border-radius:0 0 3px 3px"></div>
<div class="t" style="left:754.84px;top:801.00px;font-size:15.71px;letter-spacing:-0.350px;color:#444;transform:scaleX(0.9705);">Company Payer</div>
<div class="t" style="left:863.98px;top:801.00px;font-size:15.71px;letter-spacing:-0.350px;color:#444;font-weight:bold;transform:scaleX(0.9901);">0 Ft</div>
<div class="a" style="left:910px;top:791px;width:113px;height:34px;background:#ececec;border-radius:0 0 3px 3px"></div>
<div class="t" style="left:918.39px;top:801.00px;font-size:15.17px;letter-spacing:-0.350px;color:#444;">Packages</div>
<div class="t" style="left:986.88px;top:801.00px;font-size:15.71px;letter-spacing:-0.350px;color:#444;font-weight:bold;transform:scaleX(0.9901);">0 Ft</div>
<div class="a" style="left:1032px;top:791px;width:105px;height:34px;background:#ececec;border-radius:0 0 3px 3px"></div>
<div class="t" style="left:1041.74px;top:801.00px;font-size:15.17px;letter-spacing:-0.014px;color:#444;">City Tax</div>
<div class="t" style="left:1099.77px;top:801.00px;font-size:15.71px;letter-spacing:-0.202px;color:#444;font-weight:bold;">0 Ft</div>
<div class="t" style="left:305.22px;top:835.00px;font-size:15.59px;letter-spacing:0.445px;color:#aaa;">Credit limit</div>
<div class="a" style="left:306px;top:854px;width:310px;height:32px;border:1px solid #e0e0e0;background:#fff"></div>
<div class="t" style="left:310.61px;top:863.00px;font-size:17.38px;letter-spacing:0.443px;color:#8a8a8a;">No limit</div>
<svg class="a" style="left:601px;top:867px" width="9" height="6" viewBox="0 0 9 6"><path d="M0 0h9L4.5 5z" fill="#777"/></svg>
<div class="t" style="left:623.22px;top:835.00px;font-size:15.59px;letter-spacing:-0.192px;color:#aaa;">Currency exchange date</div>
<div class="a" style="left:624px;top:854px;width:147px;height:32px;border:1px solid #d8d8d8;background:#fff"></div>
<div class="a" style="left:733px;top:855px;width:1px;height:30px;background:#e4e4e4"></div>
<div class="a" style="left:752px;top:855px;width:1px;height:30px;background:#e4e4e4"></div>
<div class="t" style="left:629.12px;top:862.00px;font-size:18.57px;letter-spacing:-0.350px;color:#333;transform:scaleX(0.9492);">2020. 06. 19.</div>
<svg class="a" style="left:737px;top:864px" width="11" height="11" viewBox="0 0 11 11"><path d="M1 1l9 9M10 1l-9 9" stroke="#444" stroke-width="1.8"/></svg>
<svg class="a" style="left:758px;top:867px" width="9" height="6" viewBox="0 0 9 6"><path d="M0 0h9L4.5 5z" fill="#666"/></svg>
<div class="t" style="left:1141.76px;top:836.00px;font-size:14.83px;letter-spacing:0.333px;color:#aaa;">Current balance</div>
<div class="t" style="left:1211.64px;top:862.00px;font-size:21.43px;letter-spacing:0.369px;color:#111;">0 Ft</div>
<div class="t" style="left:1451.21px;top:836.00px;font-size:14.83px;letter-spacing:0.277px;color:#aaa;">Postings forecast</div>
<div class="t" style="left:1476.64px;top:862.00px;font-size:21.43px;letter-spacing:0.067px;color:#111;">323,88 Ft</div>
<div class="t" style="left:1850.10px;top:836.00px;font-size:14.83px;letter-spacing:0.813px;color:#aaa;">Total:</div>
<div class="t" style="left:1794.54px;top:862.00px;font-size:21.43px;letter-spacing:0.067px;color:#111;">323,88 Ft</div>
<div class="a" style="left:591px;top:814px;width:232px;height:91px;border:4px solid #d5212c;border-radius:28px"></div>
<div class="a" style="left:275px;top:912px;width:1645px;height:52px;background:#f8f8f8;border-top:1px solid #ececec"></div>
<div class="a" style="left:304px;top:921px;width:109px;height:36px;background:#fff;border:1px solid #dedede;border-bottom-color:#d2d2d2;border-radius:2px"></div>
<svg class="a" style="left:326px;top:932px" width="18" height="15" viewBox="0 0 18 15"><path d="M1.5 8l5 5L16.5 2" fill="none" stroke="#555" stroke-width="3.8"/></svg>
<div class="t" style="left:350.20px;top:930.00px;font-size:19.29px;letter-spacing:-0.350px;color:#666;transform:scaleX(0.9227);">Save</div>
<div class="a" style="left:421px;top:921px;width:119px;height:36px;background:#fff;border:1px solid #dedede;border-bottom-color:#d2d2d2;border-radius:2px"></div>
<div class="t" style="left:442.61px;top:931.00px;font-size:18.62px;letter-spacing:0.210px;color:#666;">No show</div>
<div class="a" style="left:547px;top:921px;width:116px;height:36px;background:#fff;border:1px solid #dedede;border-bottom-color:#d2d2d2;border-radius:2px"></div>
<div class="t" style="left:568.87px;top:931.00px;font-size:18.62px;letter-spacing:0.001px;color:#666;">Check in</div>
<div class="a" style="left:671px;top:921px;width:114px;height:36px;background:#fff;border:1px solid #dedede;border-bottom-color:#d2d2d2;border-radius:2px"></div>
<div class="t" style="left:693.41px;top:931.00px;font-size:18.62px;letter-spacing:0.582px;color:#666;">Wait list</div>
<div class="a" style="left:794px;top:921px;width:200px;height:36px;background:#fff;border:1px solid #dedede;border-bottom-color:#d2d2d2;border-radius:2px"></div>
<div class="t" style="left:814.57px;top:931.00px;font-size:18.62px;letter-spacing:0.202px;color:#666;">Cancel reservation</div>
<div class="a" style="left:1800px;top:921px;width:93px;height:36px;background:#fff;border:1px solid #dedede;border-bottom-color:#d2d2d2;border-radius:2px"></div>
<div class="t" style="left:1822.65px;top:930.00px;font-size:21.38px;letter-spacing:-0.350px;color:#4a7099;transform:scaleX(0.8849);">Close</div>
<div class="a" style="left:0px;top:964px;width:1920px;height:2px;background:#626262"></div>
</body></html>
